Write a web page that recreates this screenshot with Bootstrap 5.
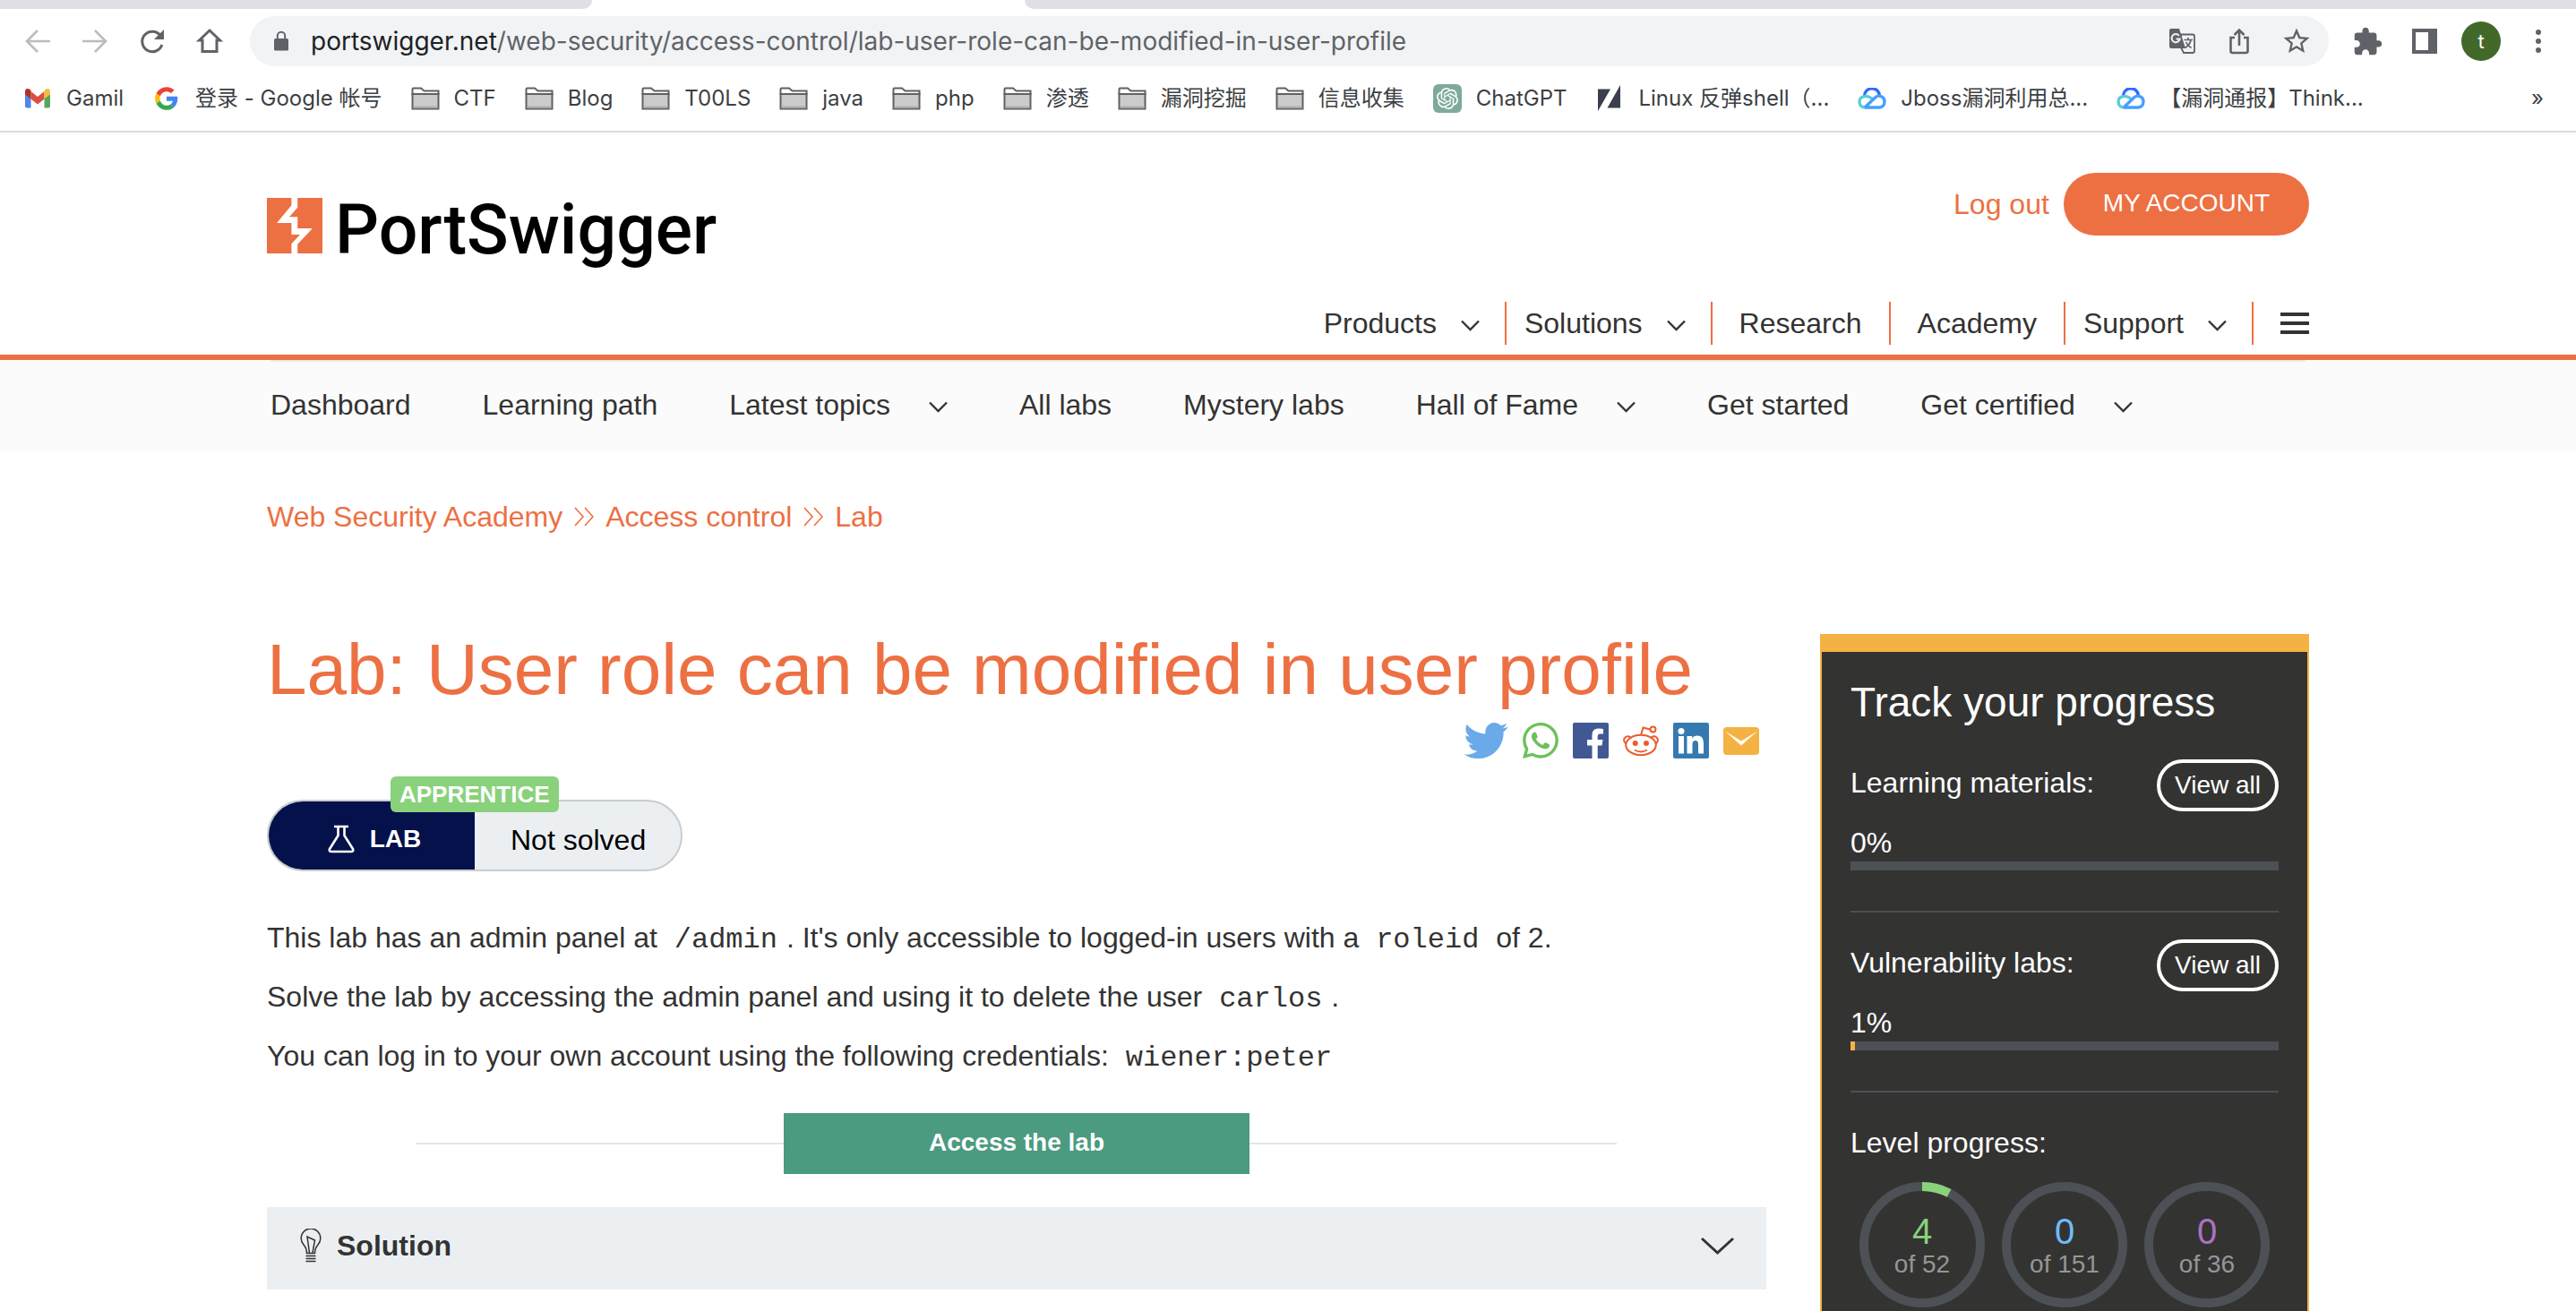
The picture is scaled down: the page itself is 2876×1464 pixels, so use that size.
<!DOCTYPE html>
<html lang="en">
<head>
<meta charset="utf-8">
<meta name="viewport" content="width=device-width, initial-scale=1">
<title>Lab: User role can be modified in user profile | Web Security Academy</title>
<link rel="stylesheet" href="https://cdn.jsdelivr.net/npm/bootstrap@5.3.0/dist/css/bootstrap.min.css">
<script src="https://cdn.jsdelivr.net/npm/bootstrap@5.3.0/dist/js/bootstrap.bundle.min.js"></script>
<style>
  :root { --ps-orange: #ed7043; --ps-ink: #333332; --ps-amber: #f4b243; --ps-pale: #ebeff2; --ps-green: #8ad17b; --ps-track: #4d5055; }
  body { font-family: "Liberation Sans", Arial, sans-serif; font-size: 32px; line-height: 48px; color: var(--ps-ink); background: #fff; }
  a { text-decoration: none; color: inherit; }
  svg { display: block; flex: none; }
  button { color: inherit; }

  /* browser frame */
  .chrome-ui { font-family: Inter, "Noto Sans CJK SC", sans-serif; color: #3c4043; border-bottom: 2px solid #dadce0; }
  .tab-strip { height: 10px; }
  .tab-rest { background: #dee0e4; }
  .tab-rest:first-child { width: 23%; border-bottom-right-radius: 10px; }
  .tab-rest:last-child { border-bottom-left-radius: 10px; }
  .tab-live { width: 483px; }
  .tool-row { padding: 8px 34px 0 26px; }
  .tool-btn { background: none; border: 0; padding: 0; color: #5f6368; }
  .tool-left { gap: 32px; margin-right: 29px; }
  .tool-left .off { color: #babcbe; }
  .tool-mid { gap: 32px; }
  .tool-right { gap: 32px; margin-left: 28px; }
  .omnibox { height: 56px; border-radius: 28px; background: #f1f3f4; padding: 0 20px 0 26px; color: #5f6368; }
  .url-text { font-size: 28px; line-height: 40px; outline: 0; white-space: nowrap; }
  .url-text b { font-weight: 400; color: #202124; }
  .avatar-dot { width: 44px; height: 44px; margin: 0 -6px; background: #43692a; color: #fff; font-size: 22px; line-height: 44px; }
  .mark-row { height: 72px; padding: 0 36px 0 26px; gap: 32px; font-size: 24px; line-height: 36px; white-space: nowrap; }
  .mark-row a { display: flex; align-items: center; gap: 16px; }

  /* site header */
  .site-wrap { width: 100%; max-width: 2280px; margin: 0 auto; }
  .site-head { border-bottom: 6px solid var(--ps-orange); }
  .site-head .site-wrap { padding: 45px 0 11px; }
  .brand { gap: 14px; margin-top: 26px; color: #000; font: 500 77px/77px Roboto, sans-serif; }
  .acct { gap: 16px; margin-bottom: 74px; color: var(--ps-orange); }
  .acct-btn { height: 70px; border-radius: 35px; background: var(--ps-orange); color: #fff; font-size: 28px; line-height: 68px; padding: 0 44px; }
  .main-nav li { display: flex; align-items: center; padding: 0 30px; border-right: 2px solid var(--ps-orange); }
  .main-nav li.drop { padding: 0 28px 0 20px; }
  .main-nav .drop a { display: flex; align-items: center; gap: 27px; }
  .main-nav li:last-child { border: 0; padding: 0 0 0 30px; }
  .main-nav .drop svg, .sub-nav svg { margin-top: 4px; }
  .sub-nav { background: #fbfbfb; }
  .sub-nav ul { margin: 0 4px; gap: 80px; border-top: 2px solid #e9eaea; line-height: 96px; padding-bottom: 4px; }
  .sub-nav a { display: flex; align-items: center; gap: 43px; }

  /* content */
  .crumbs { padding: 49px 0 107px; gap: 13px; color: var(--ps-orange); }
  .lab-col { min-width: 0; }
  .lab-title { font-size: 80px; line-height: 80px; font-weight: 400; color: var(--ps-orange); margin: 0; }
  .share { gap: 16px; margin: 19px 8px 46px 0; }
  .lab-pill { position: relative; width: 464px; height: 80px; border: 2px solid #c9cdce; border-radius: 40px; background: var(--ps-pale); color: #000; margin-bottom: 50px; }
  .lab-kind { width: 230px; height: 76px; border-radius: 38px 0 0 38px; background: #04114b; color: #fff; font-size: 28px; gap: 17px; padding: 8px 0 0 6px; }
  .lab-state { line-height: 50px; padding: 18px 0 8px 40px; }
  .lab-level { position: absolute; left: 136px; top: -28px; border-radius: 6px; background: var(--ps-green); color: #fff; font-size: 26px; line-height: 40px; padding: 0 10px; }
  .lab-text p { margin: 0 0 18px; }
  .lab-text code { font: 32px/32px "Liberation Mono", monospace; color: inherit; padding: 0 10px; }
  .launch { padding: 0 10%; margin-top: 40px; }
  .launch i { flex: 1; height: 2px; background: #e5e5e5; }
  .launch-btn { width: 520px; height: 68px; border-radius: 0; background: #4a9b80; color: #fff; font-weight: 700; font-size: 28px; line-height: 66px; }
  .answer { background: var(--ps-pale); margin-top: 37px; padding: 19px 36px 25px 36px; gap: 16px; font-weight: 700; border: 0; }

  .track { width: 546px; margin-left: 60px; background: var(--ps-ink); color: #fff; border: solid var(--ps-amber); border-width: 20px 2px 2px; padding: 28px 32px 40px; }
  .track h2 { font-size: 46px; line-height: 56px; font-weight: 400; margin: 0 0 36px; }
  .track h3 { font-size: 32px; line-height: 52px; font-weight: 400; margin: 0; }
  .view-btn { width: 136px; height: 58px; border: 4px solid #fff; border-radius: 29px; font-size: 28px; line-height: 50px; text-align: center; }
  .pct { line-height: 42px; margin-top: 14px; }
  .track .progress { height: 10px; border-radius: 0; background: var(--ps-track); }
  .track .progress-bar { background: var(--ps-amber); }
  .track hr { margin: 45px 0 30px; border: 0; height: 2px; background: var(--ps-track); opacity: 1; }
  .rings { margin-top: 18px; }
  .rings text { text-anchor: middle; font-size: 28px; fill: #969696; }
  .rings .num { font-size: 40px; }
  .rings .n-green { fill: #8ad17b; }
  .rings .n-blue { fill: #6cbdf9; }
  .rings .n-purple { fill: #a973c2; }
</style>
</head>
<body>
<svg width="0" height="0" class="position-absolute" aria-hidden="true">
  <symbol id="folder" viewBox="0 0 32 26"><path d="M1.5 8V2.500Q1.500 1.500 2.500 1.500H11L14.500 4.500H30.500V8Z" fill="#fff" stroke="#616161" stroke-width="2"/><path d="M1.500 8H30.500V24.500H1.500Z" fill="#cbcbcb" stroke="#616161" stroke-width="2"/><path d="M2.500 21.500h27v2h-27z" fill="#b0b0b0"/></symbol>
  <symbol id="chev" viewBox="0 0 21 13"><path d="M1 1.500 10.500 11 20 1.500" fill="none" stroke="currentColor" stroke-width="2.300"/></symbol>
  <symbol id="dbl" viewBox="0 0 22 22"><path d="M1 1 10 11 1 21M12 1 21 11 12 21" fill="none" stroke="currentColor" stroke-width="1.600"/></symbol>
  <symbol id="cloud" viewBox="0 0 32 24"><path d="M7.500 9.500A8.500 8.500 0 0 1 24.500 9" fill="none" stroke="#2f6bff" stroke-width="3.400"/><path d="M17 13.500C13 8 2 8 2 15.500 2 20 5 22 8.500 22" fill="none" stroke="#5ccbd9" stroke-width="3.400"/><path d="M8 22 20 10.500C24 7.500 30 10 30 15.500 30 20 27 22 23.500 22H8" fill="none" stroke="#45a0ff" stroke-width="3.400" stroke-linejoin="round"/></symbol>
</svg>

<div class="vh-100 overflow-hidden d-flex flex-column">
  <div class="chrome-ui flex-shrink-0">
    <div class="tab-strip d-flex"><div class="tab-rest"></div><div class="tab-live"></div><div class="tab-rest flex-grow-1"></div></div>
    <div class="tool-row d-flex align-items-center">
      <div class="tool-left d-flex">
        <button class="tool-btn off" type="button" aria-label="Back"><svg width="32" height="32" fill="none" stroke="currentColor" stroke-width="2.600"><path d="M30 16H4M16 4 4 16 16 28"/></svg></button>
        <button class="tool-btn off" type="button" aria-label="Forward"><svg width="32" height="32" fill="none" stroke="currentColor" stroke-width="2.600"><path d="M2 16H28M16 4 28 16 16 28"/></svg></button>
        <button class="tool-btn" type="button" aria-label="Reload"><svg width="32" height="32" fill="none" stroke="currentColor" stroke-width="3"><path d="M26.800 20A11.300 11.300 0 1 1 25 9.500"/><path d="M29 3V14H18Z" fill="currentColor" stroke="none"/></svg></button>
        <button class="tool-btn" type="button" aria-label="Home"><svg width="32" height="32" fill="none" stroke="currentColor" stroke-width="3"><path d="M4.500 15 16 4 27.500 15H24V27.500H8V15Z"/></svg></button>
      </div>
      <div class="omnibox flex-grow-1 d-flex align-items-center">
        <svg width="18" height="24" fill="currentColor"><path d="M2.500 9H15.500Q17 9 17 10.500V21Q17 22.500 15.500 22.500H2.500Q1 22.500 1 21V10.500Q1 9 2.500 9Z"/><path d="M4.800 10V6a4.200 4.200 0 0 1 8.400 0v4" fill="none" stroke="currentColor" stroke-width="2"/></svg>
        <div class="url-text flex-grow-1 ps-4" role="textbox" contenteditable="true" spellcheck="false" aria-label="Address"><b>portswigger.net</b>/web-security/access-control/lab-user-role-can-be-modified-in-user-profile</div>
        <div class="tool-mid d-flex">
          <button class="tool-btn" type="button" aria-label="Translate"><svg width="32" height="32"><path d="M15 8.500H28Q30 8.500 30 10.500V27Q30 29 28 29H18L15 23Z" fill="none" stroke="#5f6368" stroke-width="1.800"/><path d="M4 2H13L20 24H4Q2 24 2 22V4Q2 2 4 2Z" fill="#5f6368"/><path d="M12.800 9.800A4.600 4.600 0 1 0 13.700 13.500H9.500" fill="none" stroke="#f1f3f4" stroke-width="2"/><path d="M18.500 14.500H28M23 12V14.500M26 14.500Q25 20 19.500 23.500M20.500 17Q22.500 21.500 26.500 23.500" fill="none" stroke="#5f6368" stroke-width="1.700"/></svg></button>
          <button class="tool-btn" type="button" aria-label="Share"><svg width="32" height="32" fill="none" stroke="currentColor" stroke-width="2.600"><path d="M11 12H6.500V27Q6.500 29 8.500 29H23.500Q25.500 29 25.500 27V12H21M16 21V4M10.500 9 16 3.500 21.500 9"/></svg></button>
          <button class="tool-btn" type="button" aria-label="Bookmark"><svg width="32" height="32" viewBox="1 1 22 22" fill="currentColor"><path d="M22 9.240l-7.190-.62L12 2 9.190 8.630 2 9.240l5.460 4.730L5.820 21 12 17.270 18.180 21l-1.630-7.030L22 9.240zM12 15.400l-3.760 2.270 1-4.280-3.320-2.880 4.380-.38L12 6.100l1.710 4.040 4.380.38-3.320 2.880 1 4.280L12 15.400z"/></svg></button>
        </div>
      </div>
      <div class="tool-right d-flex align-items-center">
        <button class="tool-btn" type="button" aria-label="Extensions"><svg width="32" height="32" viewBox="1.500 0.500 22 22" fill="currentColor"><path d="M20.500 11H19V7c0-1.100-.9-2-2-2h-4V3.500C13 2.120 11.880 1 10.500 1S8 2.120 8 3.500V5H4c-1.100 0-1.990.9-1.990 2v3.800H3.500c1.490 0 2.700 1.210 2.700 2.700s-1.210 2.700-2.700 2.700H2V20c0 1.100.9 2 2 2h3.800v-1.500c0-1.490 1.210-2.700 2.700-2.700 1.490 0 2.700 1.210 2.700 2.700V22H17c1.100 0 2-.9 2-2v-4h1.500c1.380 0 2.500-1.120 2.500-2.500S21.880 11 20.500 11z"/></svg></button>
        <button class="tool-btn" type="button" aria-label="Side panel"><svg width="30" height="30" fill="currentColor"><path d="M1 1H29V29H1ZM5 5V25H19V5Z" fill-rule="evenodd"/></svg></button>
        <button class="tool-btn avatar-dot rounded-circle" type="button" aria-label="Profile">t</button>
        <button class="tool-btn ps-2" type="button" aria-label="Menu"><svg width="16" height="32" fill="currentColor"><circle cx="8" cy="6" r="3"/><circle cx="8" cy="16" r="3"/><circle cx="8" cy="26" r="3"/></svg></button>
      </div>
    </div>
    <nav class="mark-row d-flex align-items-center" aria-label="Bookmarks">
      <a href="#"><svg width="32" height="24" viewBox="0 0 32 24"><path d="M2 4V20.500Q2 22.500 4 22.500H8.500V11Z" fill="#4f86ec"/><path d="M30 4V20.500Q30 22.500 28 22.500H23.500V11Z" fill="#58a55c"/><path d="M8.500 4 16 10 23.500 4V12.500L16 18.500 8.500 12.500Z" fill="#d95140"/><path d="M2 6V4C2 1 5 0 7.500 2L8.500 3V12.500L2 7.500Z" fill="#b13025"/><path d="M30 6V4C30 1 27 0 24.500 2L23.500 3V12.500L30 7.500Z" fill="#f2bd42"/></svg>Gamil</a>
      <a href="#"><svg width="32" height="26" viewBox="-6 0 60 48"><path fill="#EA4335" d="M24 9.500c3.540 0 6.710 1.220 9.210 3.600l6.850-6.850C35.900 2.380 30.470 0 24 0 14.620 0 6.510 5.380 2.560 13.220l7.980 6.190C12.430 13.720 17.740 9.500 24 9.500z"/><path fill="#4285F4" d="M46.980 24.550c0-1.570-.15-3.090-.38-4.550H24v9.020h12.940c-.58 2.960-2.260 5.480-4.780 7.180l7.730 6c4.510-4.180 7.090-10.360 7.090-17.650z"/><path fill="#FBBC05" d="M10.530 28.590c-.48-1.450-.76-2.990-.76-4.590s.27-3.140.76-4.590l-7.980-6.190C.92 16.460 0 20.120 0 24c0 3.880.92 7.540 2.560 10.780l7.970-6.190z"/><path fill="#34A853" d="M24 48c6.480 0 11.930-2.130 15.890-5.810l-7.730-6c-2.150 1.450-4.920 2.300-8.160 2.300-6.260 0-11.570-4.220-13.470-9.910l-7.980 6.190C6.510 42.620 14.620 48 24 48z"/></svg>登录 - Google 帐号</a>
      <a href="#"><svg width="32" height="26"><use href="#folder"/></svg>CTF</a>
      <a href="#"><svg width="32" height="26"><use href="#folder"/></svg>Blog</a>
      <a href="#"><svg width="32" height="26"><use href="#folder"/></svg>T00LS</a>
      <a href="#"><svg width="32" height="26"><use href="#folder"/></svg>java</a>
      <a href="#"><svg width="32" height="26"><use href="#folder"/></svg>php</a>
      <a href="#"><svg width="32" height="26"><use href="#folder"/></svg>渗透</a>
      <a href="#"><svg width="32" height="26"><use href="#folder"/></svg>漏洞挖掘</a>
      <a href="#"><svg width="32" height="26"><use href="#folder"/></svg>信息收集</a>
      <a href="#"><svg width="32" height="32" viewBox="-4 -4 32 32"><rect x="-4" y="-4" width="32" height="32" rx="6" fill="#7faa9b"/><path fill="#fff" d="M22.282 9.821a5.985 5.985 0 0 0-.516-4.911 6.046 6.046 0 0 0-6.510-2.900A6.065 6.065 0 0 0 4.981 4.182a5.985 5.985 0 0 0-3.998 2.900 6.046 6.046 0 0 0 .743 7.097 5.980 5.980 0 0 0 .511 4.911 6.051 6.051 0 0 0 6.515 2.900A5.985 5.985 0 0 0 13.260 24a6.056 6.056 0 0 0 5.772-4.206 5.989 5.989 0 0 0 3.998-2.900 6.056 6.056 0 0 0-.748-7.073zm-9.022 12.608a4.476 4.476 0 0 1-2.876-1.041l.142-.080 4.778-2.758a.795.795 0 0 0 .393-.681v-6.737l2.020 1.169a.071.071 0 0 1 .038.052v5.583a4.504 4.504 0 0 1-4.495 4.494zm-9.661-4.125a4.471 4.471 0 0 1-.535-3.014l.142.085 4.783 2.758a.771.771 0 0 0 .781 0l5.843-3.369v2.332a.080.080 0 0 1-.033.062L9.740 19.950a4.499 4.499 0 0 1-6.141-1.646zM2.341 7.896a4.485 4.485 0 0 1 2.366-1.973V11.600a.766.766 0 0 0 .388.677l5.814 3.354-2.020 1.169a.076.076 0 0 1-.071 0l-4.830-2.787A4.504 4.504 0 0 1 2.341 7.872zm16.596 3.856L13.104 8.364 15.119 7.200a.076.076 0 0 1 .071 0l4.830 2.791a4.494 4.494 0 0 1-.677 8.104v-5.677a.790.790 0 0 0-.407-.667zm2.011-3.023l-.142-.085-4.774-2.782a.776.776 0 0 0-.785 0L9.409 9.230V6.897a.066.066 0 0 1 .028-.062l4.830-2.787a4.499 4.499 0 0 1 6.680 4.660zM8.307 12.863l-2.020-1.164a.080.080 0 0 1-.038-.057V6.074a4.499 4.499 0 0 1 7.376-3.454l-.142.081L8.704 5.459a.795.795 0 0 0-.393.681zm1.098-2.365l2.602-1.500 2.607 1.500v2.999l-2.597 1.500-2.607-1.500Z"/></svg>ChatGPT</a>
      <a href="#"><svg width="32" height="32"><path d="M3 5.500H17L3 30ZM28 1V26.500H13.500Z" fill="#3a3f4e"/></svg>Linux 反弹shell（...</a>
      <a href="#"><svg width="32" height="24"><use href="#cloud"/></svg>Jboss漏洞利用总...</a>
      <a href="#"><svg width="32" height="24"><use href="#cloud"/></svg>【漏洞通报】Think...</a>
      <a href="#" class="ms-auto">»</a>
    </nav>
  </div>

  <div class="flex-grow-1 overflow-hidden">
    <header>
      <div class="site-head">
        <div class="site-wrap d-flex justify-content-between align-items-start">
          <a href="#" class="brand d-flex align-items-baseline"><svg width="62" height="62" viewBox="0 0 62 62"><path fill="#ed7043" d="M0 0H62V62H0Z"/><path fill="#fff" d="M27.400 0H34.200V10.700L25 21.300H34.200V34H50.900L34.200 51.700V62H27.400V51.300L37 41H27.400V28H11.100L27.400 8.300Z"/></svg><span>PortSwigger</span></a>
          <div>
            <div class="acct d-flex align-items-center justify-content-end"><a href="#">Log out</a><a href="#" class="acct-btn btn border-0">MY ACCOUNT</a></div>
            <nav><ul class="main-nav list-unstyled d-flex justify-content-end m-0">
              <li class="drop"><a href="#">Products<svg width="21" height="13"><use href="#chev"/></svg></a></li>
              <li class="drop"><a href="#">Solutions<svg width="21" height="13"><use href="#chev"/></svg></a></li>
              <li><a href="#">Research</a></li>
              <li><a href="#">Academy</a></li>
              <li class="drop"><a href="#">Support<svg width="21" height="13"><use href="#chev"/></svg></a></li>
              <li><button class="tool-btn" type="button" aria-label="More"><svg width="32" height="24" fill="#333332"><path d="M0 0H32V4H0ZM0 10H32V14H0ZM0 20H32V24H0Z"/></svg></button></li>
            </ul></nav>
          </div>
        </div>
      </div>
      <nav class="sub-nav"><div class="site-wrap"><ul class="list-unstyled d-flex">
        <li><a href="#">Dashboard</a></li>
        <li><a href="#">Learning path</a></li>
        <li><a href="#">Latest topics<svg width="21" height="13"><use href="#chev"/></svg></a></li>
        <li><a href="#">All labs</a></li>
        <li><a href="#">Mystery labs</a></li>
        <li><a href="#">Hall of Fame<svg width="21" height="13"><use href="#chev"/></svg></a></li>
        <li><a href="#">Get started</a></li>
        <li><a href="#">Get certified<svg width="21" height="13"><use href="#chev"/></svg></a></li>
      </ul></div></nav>
    </header>

    <main class="site-wrap">
      <nav class="crumbs d-flex align-items-center" aria-label="Breadcrumb">
        <a href="#">Web Security Academy</a><svg width="22" height="22"><use href="#dbl"/></svg><a href="#">Access control</a><svg width="22" height="22"><use href="#dbl"/></svg><a href="#">Lab</a>
      </nav>
      <div class="d-flex align-items-start">
        <div class="lab-col flex-grow-1">
          <h1 class="lab-title">Lab: User role can be modified in user profile</h1>
          <div class="share d-flex justify-content-end">
            <a href="#" aria-label="Twitter"><svg width="50" height="40" viewBox="0 2.200 24 19.500"><path fill="#6aaae9" d="M23.953 4.570a10 10 0 01-2.825.775 4.958 4.958 0 002.163-2.723c-.951.555-2.005.959-3.127 1.184a4.920 4.920 0 00-8.384 4.482C7.690 8.095 4.067 6.130 1.640 3.162a4.822 4.822 0 00-.666 2.475c0 1.710.87 3.213 2.188 4.096a4.904 4.904 0 01-2.228-.616v.06a4.923 4.923 0 003.946 4.827 4.996 4.996 0 01-2.212.085 4.936 4.936 0 004.604 3.417 9.867 9.867 0 01-6.102 2.105c-.39 0-.779-.023-1.170-.067a13.995 13.995 0 007.557 2.209c9.053 0 13.998-7.496 13.998-13.985 0-.21 0-.42-.015-.63A9.935 9.935 0 0024 4.590z"/></svg></a>
            <a href="#" aria-label="WhatsApp"><svg width="40" height="40" viewBox="0 0 16 16"><path fill="#6dc05b" d="M13.601 2.326A7.854 7.854 0 0 0 7.994 0C3.627 0 .068 3.558.064 7.926c0 1.399.366 2.760 1.057 3.965L0 16l4.204-1.102a7.933 7.933 0 0 0 3.790.965h.004c4.368 0 7.926-3.558 7.930-7.930A7.898 7.898 0 0 0 13.600 2.326zM7.994 14.521a6.573 6.573 0 0 1-3.356-.92l-.24-.144-2.494.654.666-2.433-.156-.251a6.560 6.560 0 0 1-1.007-3.505c0-3.626 2.957-6.584 6.591-6.584a6.560 6.560 0 0 1 4.660 1.931 6.557 6.557 0 0 1 1.928 4.660c-.004 3.639-2.961 6.592-6.592 6.592zm3.615-4.934c-.197-.099-1.170-.578-1.353-.646-.182-.065-.315-.099-.445.099-.133.197-.513.646-.627.775-.114.133-.232.148-.43.05-.197-.1-.836-.308-1.592-.985-.59-.525-.985-1.175-1.103-1.372-.114-.198-.011-.304.088-.403.087-.088.197-.232.296-.346.1-.114.133-.198.198-.33.065-.134.034-.248-.015-.347-.05-.099-.445-1.076-.612-1.470-.16-.389-.323-.335-.445-.34-.114-.007-.247-.007-.38-.007a.729.729 0 0 0-.529.247c-.182.198-.691.677-.691 1.654 0 .977.71 1.916.81 2.049.098.133 1.394 2.132 3.383 2.992.47.205.84.326 1.129.418.475.152.904.129 1.246.08.38-.058 1.171-.48 1.338-.943.164-.464.164-.86.114-.943-.049-.084-.182-.133-.38-.232z"/></svg></a>
            <a href="#" aria-label="Facebook"><svg width="40" height="40"><rect width="40" height="40" rx="2" fill="#415892"/><path fill="#fff" d="M21.500 40V25.500H16V19H21.500V14Q21.500 6.500 29 6.500Q32 6.500 34 7V12.500H30.500Q27.700 12.500 27.700 15.500V19H33.500L32.500 25.500H27.700V40Z"/></svg></a>
            <a href="#" aria-label="Reddit"><svg width="40" height="40" fill="none" stroke="#ee5a2b" stroke-width="2"><path d="M20 14 22.500 5.500 30 7.500"/><circle cx="33.500" cy="7.500" r="3"/><path d="M4 23.500A4.200 4.200 0 1 1 9 17.500M36 23.500A4.200 4.200 0 1 0 31 17.500"/><ellipse cx="20" cy="25" rx="16.800" ry="11.200"/><path d="M13 30.500Q20 34.500 27 30.500"/><g fill="#ee5a2b" stroke="none"><circle cx="13.700" cy="23" r="3"/><circle cx="26" cy="23" r="3"/></g></svg></a>
            <a href="#" aria-label="LinkedIn"><svg width="40" height="40"><rect width="40" height="40" rx="2" fill="#3679b1"/><g fill="#fff"><circle cx="9" cy="9.500" r="3.500"/><path d="M6 15H12V34.500H6ZM15.500 15H21.200V17.700Q23 14.600 27 14.600Q34 14.600 34 23V34.500H28V24Q28 20 25 20Q21.500 20 21.500 24V34.500H15.500Z"/></g></svg></a>
            <a href="#" aria-label="Email"><svg width="40" height="40"><rect y="5" width="40" height="31" rx="4" fill="#f4b243"/><path fill="#fff" d="M2 9.500 20 20.500 38 9.500 20 25.500Z"/></svg></a>
          </div>
          <div class="lab-pill d-flex">
            <div class="lab-kind d-flex align-items-center justify-content-center fw-bold"><svg width="30" height="32" fill="none" stroke="#fff" stroke-width="2.600"><path d="M7 2H23M11.500 2V12L2 27Q1 30 4 30H26Q29 30 28 27L18.500 12V2"/></svg>LAB</div>
            <div class="lab-state">Not solved</div>
            <span class="lab-level fw-bold">APPRENTICE</span>
          </div>
          <div class="lab-text">
            <p>This lab has an admin panel at <code>/admin</code>. It's only accessible to logged-in users with a <code>roleid</code> of 2.</p>
            <p>Solve the lab by accessing the admin panel and using it to delete the user <code>carlos</code>.</p>
            <p>You can log in to your own account using the following credentials: <code>wiener:peter</code></p>
          </div>
          <div class="launch d-flex align-items-center"><i></i><a href="#" class="launch-btn btn border-0 p-0">Access the lab</a><i></i></div>
          <button class="answer d-flex align-items-center w-100 text-start" type="button" aria-expanded="false"><svg width="26" height="38" viewBox="1 0 26 38" fill="none" stroke="#333332" stroke-width="1.500"><path d="M9.500 27.500Q9.500 22 6 18A10.800 10.800 0 1 1 22 18Q18.500 22 18.500 27.500Z"/><path d="M12.500 27 10 9 18.500 13 16 27"/><path d="M8.500 30.500H19.500M8.500 33.500H19.500M8.500 36.500H19.500" stroke-width="1.600"/></svg>Solution<svg class="ms-auto" width="37" height="21" fill="none" stroke="#333332" stroke-width="3"><path d="M1 2 18.500 18 36 2"/></svg></button>
        </div>

        <aside class="track flex-shrink-0">
          <h2>Track your progress</h2>
          <div class="d-flex justify-content-between align-items-start"><h3>Learning materials:</h3><a href="#" class="view-btn">View all</a></div>
          <div class="pct">0%</div>
          <div class="progress"><div class="progress-bar" style="width:0%"></div></div>
          <hr>
          <div class="d-flex justify-content-between align-items-start"><h3>Vulnerability labs:</h3><a href="#" class="view-btn">View all</a></div>
          <div class="pct">1%</div>
          <div class="progress"><div class="progress-bar" style="width:1%"></div></div>
          <hr>
          <h3>Level progress:</h3>
          <div class="rings d-flex justify-content-around">
            <svg width="140" height="140"><circle cx="70" cy="70" r="65" fill="none" stroke="#4d5055" stroke-width="10"/><circle cx="70" cy="70" r="65" fill="none" stroke="#8ad17b" stroke-width="10" pathLength="52" stroke-dasharray="4 48" transform="rotate(-90 70 70)"/><text class="num n-green" x="70" y="69">4</text><text x="70" y="101">of 52</text></svg>
            <svg width="140" height="140"><circle cx="70" cy="70" r="65" fill="none" stroke="#4d5055" stroke-width="10"/><text class="num n-blue" x="70" y="69">0</text><text x="70" y="101">of 151</text></svg>
            <svg width="140" height="140"><circle cx="70" cy="70" r="65" fill="none" stroke="#4d5055" stroke-width="10"/><text class="num n-purple" x="70" y="69">0</text><text x="70" y="101">of 36</text></svg>
          </div>
        </aside>
      </div>
    </main>
  </div>
</div>
</body>
</html>
